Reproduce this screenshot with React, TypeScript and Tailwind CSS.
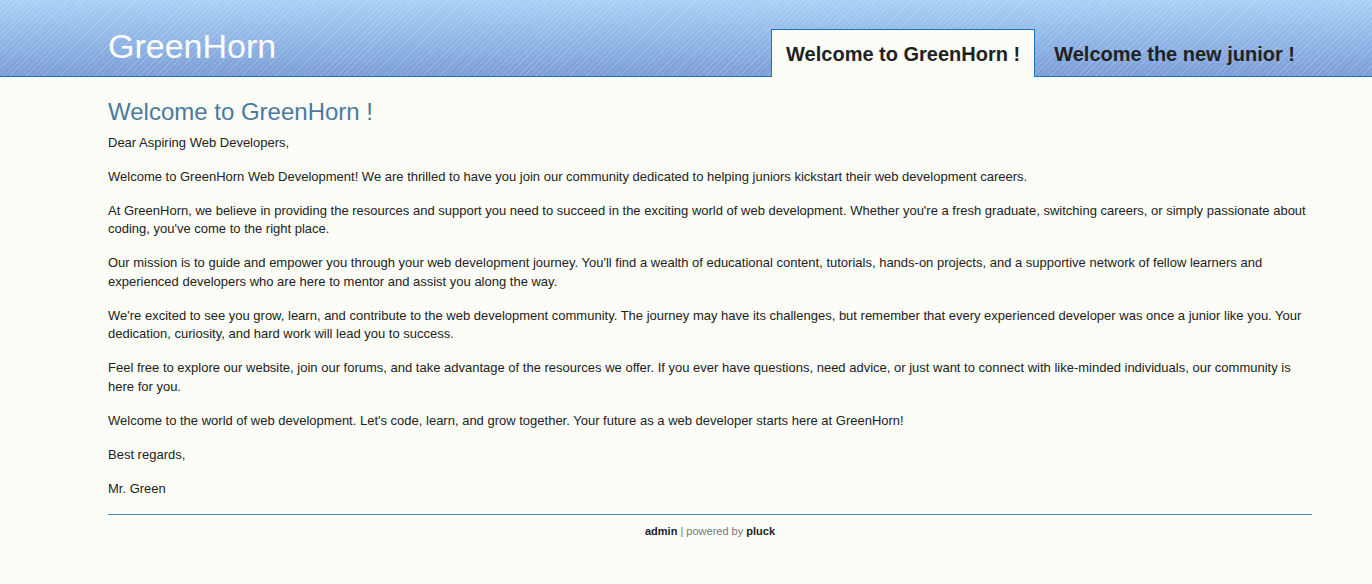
import React from "react";

const paragraphs = [
  "Dear Aspiring Web Developers,",
  "Welcome to GreenHorn Web Development! We are thrilled to have you join our community dedicated to helping juniors kickstart their web development careers.",
  "At GreenHorn, we believe in providing the resources and support you need to succeed in the exciting world of web development. Whether you're a fresh graduate, switching careers, or simply passionate about coding, you've come to the right place.",
  "Our mission is to guide and empower you through your web development journey. You'll find a wealth of educational content, tutorials, hands-on projects, and a supportive network of fellow learners and experienced developers who are here to mentor and assist you along the way.",
  "We're excited to see you grow, learn, and contribute to the web development community. The journey may have its challenges, but remember that every experienced developer was once a junior like you. Your dedication, curiosity, and hard work will lead you to success.",
  "Feel free to explore our website, join our forums, and take advantage of the resources we offer. If you ever have questions, need advice, or just want to connect with like-minded individuals, our community is here for you.",
  "Welcome to the world of web development. Let's code, learn, and grow together. Your future as a web developer starts here at GreenHorn!",
  "Best regards,",
  "Mr. Green",
];

const tabs = [
  { label: "Welcome to GreenHorn !", active: true },
  { label: "Welcome the new junior !", active: false },
];

export default function App() {
  return (
    <div className="min-h-[584px] bg-[#fcfdf6] font-['Liberation_Sans',Arial,sans-serif] text-[#222]">
      {/* header */}
      <header className="h-[77px] border-b border-[#1b75bc] bg-[image:repeating-linear-gradient(135deg,rgba(255,255,255,0.16)_0px,rgba(255,255,255,0.16)_1px,transparent_1px,transparent_4px),linear-gradient(to_bottom,#a7d1f6,#7b9dd7)]">
        <div className="ml-[108px] flex h-full w-[1204px] items-end justify-between">
          <a className="mb-[10px] text-[34px] leading-[40px] text-white">GreenHorn</a>
          <nav className="flex gap-[4px] pr-[2px]">
            {tabs.map((tab) => (
              <a
                key={tab.label}
                className={
                  tab.active
                    ? "relative -mb-px h-[48px] border border-b-0 border-[#1b75bc] bg-[#fcfdf6] px-[14px] pt-[12px] text-[20px] font-bold leading-[24px] text-[#222]"
                    : "relative -mb-px h-[48px] border border-b-0 border-transparent px-[14px] pt-[12px] text-[20px] font-bold leading-[24px] text-[#222]"
                }
              >
                {tab.label}
              </a>
            ))}
          </nav>
        </div>
      </header>

      {/* content */}
      <main className="ml-[108px] w-[1204px] pt-[21px]">
        <h1 className="mb-[7.5px] text-[24px] leading-[28px] text-[#4a7aa0]">
          Welcome to GreenHorn !
        </h1>
        <div className="text-[13px] leading-[18.5px]">
          {paragraphs.map((p, i) => (
            <p key={i} className="mb-[15.5px] last:mb-0">
              {p}
            </p>
          ))}
        </div>
        <footer className="mt-[16px] border-t border-t-[#4a8cc0] pt-[10px] text-center text-[11px] leading-[13px] text-[#777]">
          <a className="font-bold text-[#222]">admin</a> | powered by{" "}
          <a className="font-bold text-[#222]">pluck</a>
        </footer>
      </main>
    </div>
  );
}
